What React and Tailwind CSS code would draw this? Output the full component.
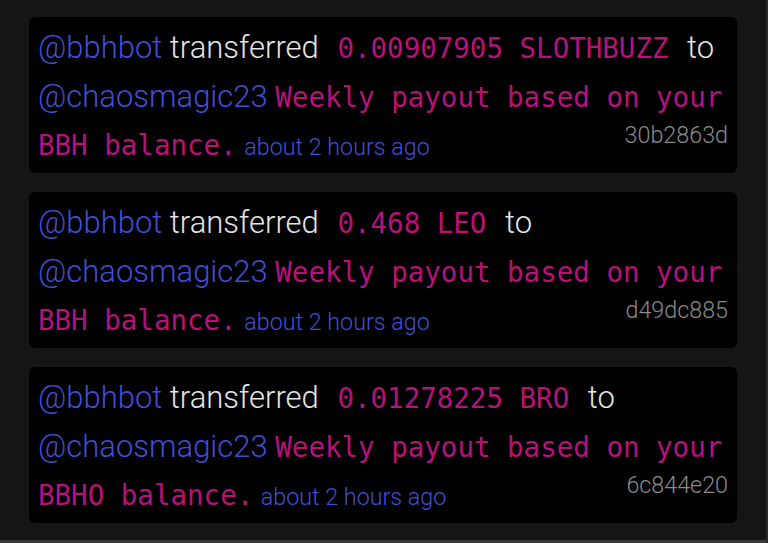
const ITEMS = [
  { amount: '0.00907905 SLOTHBUZZ', token: 'BBH', hash: '30b2863d' },
  { amount: '0.468 LEO', token: 'BBH', hash: 'd49dc885' },
  { amount: '0.01278225 BRO', token: 'BBHO', hash: '6c844e20' },
]

const sans = "font-['Roboto',sans-serif] font-light"
const mono = "font-['DejaVu_Sans_Mono',monospace] font-normal"

function Transfer({ amount, token, hash }) {
  return (
    <div className="relative rounded-md bg-black px-[9px] pt-[6px] pb-[2px]">
      <div className={`${sans} text-[31px] leading-[50px] text-[#e4e4e4]`}>
        <span className="text-[#3f4fd8]">@bbhbot</span> transferred{' '}
        <span className={`${mono} text-[27.5px] text-[#b8117a] mx-[11px]`}>{amount}</span>{' '}
        to
      </div>
      <p className={`${sans} text-[31px] leading-[47px]`}>
        <span className="text-[#3f4fd8]">@chaosmagic23</span>{' '}
        <span className={`${mono} text-[27.5px] text-[#b8117a]`}>
          Weekly payout based on your {token} balance.
        </span>{' '}
        <span className="text-[23.3px] text-[#3f4fd8]">about 2 hours ago</span>
      </p>
      <span className={`${sans} absolute right-[9px] bottom-[26px] text-[23.3px] leading-none text-[#8a8a8a]`}>
        {hash}
      </span>
    </div>
  )
}

export default function App() {
  return (
    <div className="h-[543px] w-[768px] overflow-hidden bg-[#151515] flex">
      <div className="flex-1 flex flex-col">
        <div className="flex-1 flex flex-col gap-[19px] pl-[29px] pr-[29px] pt-[17px]">
          {ITEMS.map((it) => (
            <Transfer key={it.hash} {...it} />
          ))}
        </div>
        <div className="h-[3px] bg-[#3a3a3a]" />
      </div>
      <div className="w-[2px] bg-[#2a2a2a]" />
    </div>
  )
}
